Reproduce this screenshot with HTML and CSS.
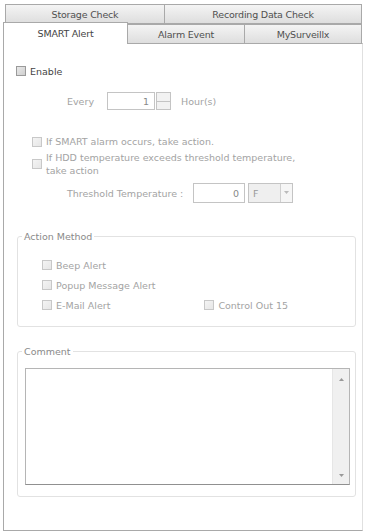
FILE: index.html
```html
<!DOCTYPE html>
<html>
<head>
<meta charset="utf-8">
<link rel="stylesheet" href="styles.css">
</head>
<body>
<div class="frame">
  <div class="tabrow row1">
    <div class="tab t-storage">Storage Check</div>
    <div class="tab t-record">Recording Data Check</div>
  </div>
  <div class="tabrow row2">
    <div class="tab active t-smart">SMART Alert</div>
    <div class="tab t-alarm">Alarm Event</div>
    <div class="tab t-mysurv">MySurveillx</div>
  </div>
  <div class="panel">
    <label class="row enable"><span class="cb"></span><span class="dark">Enable</span></label>
    <div class="row every">
      <span class="lbl-every">Every</span>
      <span class="numbox w48">1</span>
      <span class="spin"><span class="sp-up"></span><span class="sp-dn"></span></span>
      <span class="lbl-hour">Hour(s)</span>
    </div>
    <label class="row opt1"><span class="cb"></span><span>If SMART alarm occurs, take action.</span></label>
    <label class="row opt2"><span class="cb"></span><span>If HDD temperature exceeds threshold temperature,<br>take action</span></label>
    <div class="row thresh">
      <span class="lbl-thresh">Threshold Temperature :</span>
      <span class="numbox w52">0</span>
      <span class="select"><span class="sel-val">F</span><span class="sel-btn"><svg width="5" height="4" viewBox="0 0 5 4"><path d="M0 0h5L2.5 3z" fill="#bbb"/></svg></span></span>
    </div>

    <fieldset class="group action">
      <legend>Action Method</legend>
      <label class="row arow"><span class="cb"></span><span>Beep Alert</span></label>
      <label class="row arow"><span class="cb"></span><span>Popup Message Alert</span></label>
      <div class="row arow split">
        <label class="item"><span class="cb"></span><span>E-Mail Alert</span></label>
        <label class="item ctl"><span class="cb"></span><span>Control Out 15</span></label>
      </div>
    </fieldset>

    <fieldset class="group comment">
      <legend>Comment</legend>
      <div class="textarea">
        <div class="ta-body"></div>
        <div class="sbar">
          <svg width="5" height="4" viewBox="0 0 5 4"><path d="M0 4h5L2.5 1z" fill="#999"/></svg>
          <svg width="5" height="4" viewBox="0 0 5 4"><path d="M0 0h5L2.5 3z" fill="#999"/></svg>
        </div>
      </div>
    </fieldset>
  </div>
</div>
</body>
</html>
```

FILE: styles.css
```css
* { box-sizing: border-box; }
html, body { margin: 0; padding: 0; background: #fff; }
body {
  width: 365px;
  height: 532px;
  overflow: hidden;
  font-family: "DejaVu Sans", "Liberation Sans", sans-serif;
  font-size: 9.5px;
  color: #a3a3a3;
}
.frame { padding-top: 4px; }

.tabrow { display: flex; }
.row1 { margin-left: 5px; width: 357px; height: 20px; }
.row2 { margin-left: 3px; width: 359px; margin-top: -2px; height: 22px; position: relative; z-index: 2; align-items: flex-start; }

.tab {
  display: flex;
  align-items: center;
  justify-content: center;
  border: 1px solid #a9a9a9;
  background: linear-gradient(#f4f4f4, #dedede);
  color: #505050;
  font-size: 9.5px;
  letter-spacing: -0.2px;
}
.row1 .tab { height: 20px; }
.t-storage { width: 160px; }
.t-record { width: 197px; border-left: none; }
.row2 .tab { height: 20px; margin-top: 2px; }
.t-smart { width: 125px; }
.row2 .tab.active {
  margin-top: 0;
  height: 22px;
  background: #fff;
  border-bottom: none;
  color: #444;
}
.t-alarm { width: 117px; border-left: none; }
.t-mysurv { width: 117px; border-left: none; }

.panel {
  margin-left: 3px;
  width: 360px;
  height: 488px;
  margin-top: -1px;
  border: 1px solid #a9a9a9;
  border-right-color: #e0e0e0;
  position: relative;
  z-index: 1;
  padding: 21px 0 0 0;
}

.row { display: flex; align-items: center; }
.cb {
  width: 10px;
  height: 10px;
  border: 1px solid #c8c8c8;
  background: linear-gradient(135deg, #f4f4f4, #e6e6e6);
  flex: none;
  margin-right: 4px;
}
.dark { color: #444; }

.enable { margin-left: 12px; height: 12px; }
.enable .cb { border-color: #9a9a9a; background: linear-gradient(135deg, #e8e8e8, #cfcfcf); }

.every { margin-top: 15px; height: 18px; }
.lbl-every { margin-left: 63px; width: 40px; }
.numbox {
  height: 18px;
  border: 1px solid #c4c4c4;
  background: #fff;
  display: flex;
  align-items: center;
  justify-content: flex-end;
  padding-right: 5px;
  color: #888;
}
.w48 { width: 48px; }
.spin {
  width: 15px;
  height: 18px;
  margin-left: 1px;
  border: 1px solid #c4c4c4;
  display: flex;
  flex-direction: column;
  background: #f2f2f2;
}
.sp-up, .sp-dn { flex: 1; }
.sp-up { border-bottom: 1px solid #c4c4c4; }
.lbl-hour { margin-left: 10px; }

.opt1 { margin-left: 28px; margin-top: 26px; }
.opt2 { margin-left: 28px; margin-top: 4px; line-height: 13px; }

.thresh { margin-top: 6px; height: 20px; }
.lbl-thresh { margin-left: 63px; width: 126px; }
.w52 { width: 52px; height: 20px; }
.select {
  margin-left: 3px;
  width: 45px;
  height: 20px;
  border: 1px solid #c4c4c4;
  display: flex;
  background: #efefef;
}
.sel-val { flex: 1; padding-left: 4px; display: flex; align-items: center; color: #999; }
.sel-btn {
  width: 12px;
  border-left: 1px solid #d0d0d0;
  display: flex;
  align-items: center;
  justify-content: center;
  background: #f6f6f6;
}

.group {
  margin: 0 0 0 13px;
  width: 339px;
  border: 1px solid #e2e2e2;
  border-radius: 3px;
  padding: 0;
}
.group legend {
  padding: 0 2px;
  margin-left: 4px;
  color: #8a8a8a;
}
.action { margin-top: 28px; height: 96px; padding-top: 17px; }
.arow { margin-left: 24px; height: 12px; margin-bottom: 8px; }
.split .item { display: flex; align-items: center; }
.ctl { margin-left: 94px; }

.comment { margin-top: 19px; height: 151px; padding-top: 11px; }
.textarea {
  margin-left: 7px;
  width: 325px;
  height: 117px;
  border: 1px solid #b5b5b5;
  border-bottom-color: #909090;
  display: flex;
}
.ta-body { flex: 1; background: #fff; }
.sbar {
  width: 17px;
  background: #f0f0f0;
  border-left: 1px solid #e6e6e6;
  display: flex;
  flex-direction: column;
  align-items: center;
  justify-content: space-between;
  padding: 8px 0 6px;
}
```
